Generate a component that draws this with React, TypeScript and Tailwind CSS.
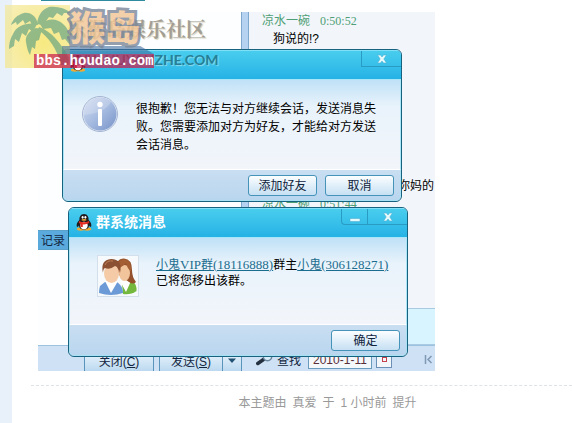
import React from 'react';

interface DialogProps {
  label: string;
  title: React.ReactNode;
  controls: React.ReactNode;
  actions: React.ReactNode;
  className: string;
  children: React.ReactNode;
}

const DialogButton: React.FC<{ children: React.ReactNode }> = ({ children }) => (
  <button
    type="button"
    className="w-[69px] h-[21px] rounded-[3px] border border-[#4593b8] bg-gradient-to-b from-[#fbfeff] to-[#c6e0f3] text-center leading-[18px] text-[#10233c]"
  >
    {children}
  </button>
);

const CloseButton = () => (
  <button type="button" aria-label="关闭" className="w-10 h-4 flex items-center justify-center border-l border-b border-[#2a9cc4]">
    <svg className="w-3 h-3" viewBox="0 0 12 12">
      <path d="M1.500 2H4.500L6 4L7.500 2H10.500L7.800 6L10.500 10H7.500L6 8L4.500 10H1.500L4.200 6Z" fill="#e6fafb" stroke="#4fb0d4" strokeWidth=".6" />
    </svg>
  </button>
);

const MinimizeButton = () => (
  <button type="button" aria-label="最小化" className="w-[26px] h-4 flex items-center justify-center rounded-bl-[4px] border-l border-b border-[#2a9cc4]">
    <svg className="w-3 h-3" viewBox="0 0 12 12">
      <path d="M1 7.500H11V10.500H1Z" fill="#e6fafb" stroke="#4fb0d4" strokeWidth=".6" />
    </svg>
  </button>
);

const Dialog: React.FC<DialogProps> = ({ label, title, controls, actions, className, children }) => (
  <section
    role="dialog"
    aria-label={label}
    className={`absolute w-[340px] flex flex-col overflow-hidden rounded-[6px] border border-[#17627f] bg-[#c3dcf1] ${className}`}
  >
    <header className="h-[29px] flex items-start justify-between border-t border-[#7fe0f7] bg-gradient-to-b from-[#48cdee] to-[#24b2e5]">
      {title}
      <div className="flex">{controls}</div>
    </header>
    <div className="flex-1 flex border-x border-t border-[#a8e6f8] bg-gradient-to-b from-[#bfe1f7] via-[#e9f3fb] via-30% to-[#f2f5fa]">
      {children}
    </div>
    <footer className="h-8 flex items-start justify-end gap-2 px-[6px] pt-[5px] border border-b-[#a8e0f4] border-x-[#a8e0f4] border-t-white rounded-b-[5px] bg-gradient-to-b from-[#c9def1] to-[#b9d6ef]">
      {actions}
    </footer>
  </section>
);

const Penguin = () => (
  <svg className="w-4 h-[17px]" viewBox="0 0 16 17">
    <ellipse cx="4.800" cy="15" rx="4" ry="1.700" fill="#efaa34" />
    <ellipse cx="11.200" cy="15" rx="4" ry="1.700" fill="#efaa34" />
    <path d="M8 0C4.600 0 3.200 3 3.400 6C1 8 0 11 1 13C2 13 3 11.500 3 11.500C3 14 5 15.500 8 15.500S13 14 13 11.500C13 11.500 14 13 15 13C16 11 15 8 12.600 6C12.800 3 11.400 0 8 0Z" fill="#211b1d" />
    <ellipse cx="8" cy="11.500" rx="3.700" ry="3.700" fill="#fff" />
    <ellipse cx="6.600" cy="3.300" rx="1" ry="1.400" fill="#fff" />
    <ellipse cx="9.400" cy="3.300" rx="1" ry="1.400" fill="#fff" />
    <ellipse cx="8" cy="5.900" rx="2.600" ry=".8" fill="#efaa34" />
    <path d="M3 7Q8 9.500 13 7L13.200 9Q9 11 6.800 10.300V13H4.500V9.700L2.900 9Z" fill="#e32a20" />
  </svg>
);

const InfoIcon = () => (
  <svg className="w-[38px] h-[38px] shrink-0" viewBox="0 0 38 38">
    <defs>
      <linearGradient id="info" x1="0" y1="0" x2="1" y2="1">
        <stop offset="0" stopColor="#d3ddf1" />
        <stop offset=".5" stopColor="#a6bbe0" />
        <stop offset="1" stopColor="#7592c7" />
      </linearGradient>
    </defs>
    <circle cx="19" cy="19" r="17.500" fill="#e6edf6" stroke="#a3b4d3" />
    <circle cx="19" cy="19" r="16.500" fill="url(#info)" />
    <path d="M2.500 20A16.500 16.500 0 0 1 30 7Q24 18 2.500 20Z" fill="#fff" opacity=".2" />
    <circle cx="19" cy="9.500" r="2.700" fill="#fff" />
    <rect x="17" y="14" width="4" height="17" rx="1" fill="#fff" />
  </svg>
);

const PeopleIcon = () => (
  <svg className="w-[42px] h-[42px] shrink-0" viewBox="0 0 42 42">
    <rect x=".5" y=".5" width="41" height="41" fill="#f7fafc" stroke="#d3dfea" />
    <path d="M25 28L35 26Q40 29 39.500 36Q34 40 26 39Z" fill="#74b83e" />
    <path d="M23 26L29 37L34 26Z" fill="#fff" />
    <path d="M19 14Q19 3 27 3.500Q35 4 35 15Q35 22 39 27Q36 30 32 27L22 20Z" fill="#94512c" />
    <ellipse cx="27.500" cy="18" rx="5.500" ry="8" fill="#f2c49c" />
    <path d="M20 13Q26 12 29 8Q30 13 34 17Q35 5 27 4Q20 5 20 13Z" fill="#a45e34" />
    <path d="M8 27L3 31Q2 34 2 38Q14 42 26 38Q26 31 20 27Z" fill="#6b9ad6" />
    <path d="M8 26L14 38L21 26Z" fill="#fff" />
    <ellipse cx="14.500" cy="18.500" rx="7.500" ry="9.500" fill="#f5cba7" />
    <path d="M6 18Q3 5 14 4Q26 4 23 18Q22 12 18 11Q13 15 8 13Q6 14 6 18Z" fill="#8c5032" />
    <path d="M8 10Q10 5 16 6" stroke="#bb7d56" fill="none" />
  </svg>
);

const Magnifier = () => (
  <svg className="w-[17px] h-4" viewBox="0 0 17 16">
    <path d="M7.500 7.500L1.800 11.500" stroke="#24303f" strokeWidth="3.500" strokeLinecap="round" />
    <circle cx="11.500" cy="4.500" r="4.200" fill="#d9effb" stroke="#69849e" strokeWidth="1.500" />
  </svg>
);

const Palm = () => (
  <svg className="w-[68px] h-[60px]" viewBox="0 0 68 60">
    <g fill="#529a80">
      <path d="M33 20C32 12 26 7 19 8C12 10 8 14 6 20L11 17L12 20L18 15L20 19L25 16L27 20Z" />
      <path d="M32 19C22 17 11 21 8 29C5 34 4 39 4 44L9 41L10 34L14 37L17 28L21 31L24 24L28 27Z" />
      <path d="M31 23C24 26 20 31 21 37C22 43 23 47 25 50L27 42L30 44L31 36L34 35L37 24Z" />
      <path d="M32 19C33 11 36 5 44 2C52 1 60 3 66 8L59 8L57 11L52 8L48 13L44 12L38 20Z" />
      <path d="M35 19C43 13 52 13 58 19C64 24 66 32 65 40L60 34L57 35L54 27L49 29L46 23L38 24Z" />
      <path d="M34 22C46 26 56 38 64 53L63 60H56C52 44 44 32 33 25Z" />
    </g>
  </svg>
);

// Forum badge stamped over the top left corner
const Watermark = () => (
  <div className="absolute left-[5px] top-[5px] w-[150px] h-[63px] pointer-events-none">
    <div className="absolute left-0 top-0 w-[65px] h-[63px] bg-[radial-gradient(circle_at_60%_60%,#f5e04a,#f3e89f)] opacity-70" />
    <div className="absolute left-[57px] top-[41px] w-[92px] h-2 bg-[#3f6d9e] opacity-60 [clip-path:polygon(0_0,85%_0,100%_100%,0_100%)]" />
    <div className="absolute left-0 top-0 opacity-60">
      <Palm />
    </div>
    <svg className="absolute left-[62px] top-0 w-[78px] h-[46px] opacity-80" viewBox="0 0 78 46">
      <text
        x="3"
        y="36"
        fontSize="35"
        fontWeight="900"
        fontFamily="'Noto Sans CJK SC', sans-serif"
        fill="#f1c594"
        stroke="#7b8798"
        strokeWidth="6"
        strokeLinejoin="miter"
        paintOrder="stroke"
      >
        猴岛
      </text>
    </svg>
    <div className="absolute left-[29px] top-[49px] w-[120px] h-[14px] bg-[#c91b4c] opacity-70" />
    <p className="absolute left-[31px] top-[49px] font-['Liberation_Mono',monospace] text-[14px] leading-[14px] font-bold text-white">
      bbs.houdao.com
    </p>
  </div>
);

const ChatWindow = () => (
  <div className="min-h-[359px] flex flex-col">
    <div className="flex-1 flex">
      <div className="w-[203px] shrink-0 flex flex-col bg-[#fdfeff]">
        <p className="h-[218px] pt-1 pl-[28px] whitespace-nowrap font-['Noto_Serif_CJK_SC','Noto_Sans_CJK_SC',serif] text-[20px] leading-[26px] font-bold text-[#a39e94] [text-shadow:1px_1px_1px_#d8d2c0]">
          乐猴岛娱乐社区
        </p>
        <div className="w-[31px] h-5 pl-[3px] border-y border-[#5aa1cc] bg-[#5aaade] leading-[20px] whitespace-nowrap text-[#12263f]">记录</div>
      </div>
      <div className="w-2 shrink-0 border-x border-[#7ea9cf] bg-[#b5d3f1]" />
      <div className="flex-1 flex flex-col bg-[#f2f6fa]">
        <div className="flex-1 pl-[13px] leading-[18px]">
          <p className="text-[#4f9f76]">
            凉水一碗<span className="pl-2.5 font-['Liberation_Serif',serif]">0:50:52</span>
          </p>
          <p className="pl-[11px]">狗说的!?</p>
          <p className="pt-[129px] pr-px text-right">你妈的</p>
          <p className="text-[#4f9f76]">
            凉水一碗<span className="pl-2.5 font-['Liberation_Serif',serif]">0:51:44</span>
          </p>
        </div>
        <div className="h-[37px] border-y border-[#a9cbe2] bg-[#d7f4ff]" />
      </div>
    </div>
    <div className="h-[26px] flex items-end overflow-hidden border-t border-[#9cc2df] bg-[#cfe2f5] text-[#12263f]">
      <div className="w-[211px] shrink-0 flex justify-end gap-[5px] pr-[7px]">
        <button type="button" className="w-[70px] h-[21px] pt-[3px] border-x border-[#5b94bb] bg-gradient-to-b from-[#eef7fd] to-[#bcd9f0] leading-[18px]">
          关闭(<u>C</u>)
        </button>
        <div className="flex border-x border-[#5b94bb] bg-gradient-to-b from-[#eef7fd] to-[#bcd9f0]">
          <button type="button" className="w-[62px] h-[21px] pt-[3px] leading-[18px]">
            发送(<u>S</u>)
          </button>
          <button type="button" aria-label="发送选项" className="w-[19px] flex items-center justify-center border-l border-[#5b94bb]">
            <svg className="w-2 h-[5px]" viewBox="0 0 8 5">
              <path d="M0 .5H8L4 5Z" fill="#235173" />
            </svg>
          </button>
        </div>
      </div>
      <div className="flex-1 h-[23px] flex items-center pl-[7px] pr-0.5">
        <Magnifier />
        <label htmlFor="date" className="pt-0.5 pl-1 pr-[7px]">查找</label>
        <input
          id="date"
          defaultValue="2010-1-11"
          className="w-16 h-[19px] px-1 border border-[#6b9cbf] bg-[#f4f8fb] text-[12px] text-[#5b2f38]"
        />
        <button type="button" aria-label="日历" className="ml-1 w-4 h-[17px] flex items-center justify-center border border-[#6b8fb5] bg-[#f3f6fa]">
          <svg className="w-[5px] h-[5px]" viewBox="0 0 5 5">
            <rect x=".5" y=".5" width="4" height="4" fill="none" stroke="#c6404c" />
          </svg>
        </button>
        <button type="button" aria-label="第一页" className="ml-auto">
          <svg className="w-[9px] h-[9px]" viewBox="0 0 9 9">
            <path d="M1.500 0V9M7.500 1L4 4.500L7.500 8" fill="none" stroke="#7f98b3" strokeWidth="1.500" />
          </svg>
        </button>
      </div>
    </div>
  </div>
);

export default function App() {
  return (
    <div className="relative min-h-screen flex bg-white font-['Liberation_Sans','Noto_Sans_CJK_SC',sans-serif] text-[12px] text-black">
      <aside className="w-3 shrink-0 bg-[#e8f1f9]" />
      <main className="flex-1 min-w-0 pl-[19px]">
        <div className="h-3 pl-[10px]">
          <div className="w-[104px] h-px bg-[#2f8ba0]" />
        </div>
        <div className="relative ml-[7px] max-w-[397px]">
          <ChatWindow />
          <Dialog
            label="提示"
            className="left-6 top-[37px] h-[153px]"
            title={
              <div className="pl-[7px] pt-1">
                <Penguin />
              </div>
            }
            controls={<CloseButton />}
            actions={
              <>
                <DialogButton>添加好友</DialogButton>
                <DialogButton>取消</DialogButton>
              </>
            }
          >
            <div className="flex items-start gap-[17px] pl-[17px] pt-[15px] pr-5">
              <InfoIcon />
              <p className="w-[242px] pt-[5px] leading-[18px]">很抱歉！您无法与对方继续会话，发送消息失败。您需要添加对方为好友，才能给对方发送会话消息。</p>
            </div>
          </Dialog>
          <Dialog
            label="群系统消息"
            className="left-[30px] top-[195px] h-[150px]"
            title={
              <h2 className="flex items-center gap-1 pl-[7px] pt-1 text-[14px] leading-[18px] font-bold text-white">
                <Penguin />
                群系统消息
              </h2>
            }
            controls={
              <>
                <MinimizeButton />
                <CloseButton />
              </>
            }
            actions={<DialogButton>确定</DialogButton>}
          >
            <div className="flex items-start gap-[17px] pl-[27px] pt-[17px]">
              <PeopleIcon />
              <p className="pt-0.5 leading-4 whitespace-nowrap">
                <a href="#group" className="text-[#1b6d8e] underline">
                  小鬼<span className="font-['Liberation_Serif',serif] text-[13px] leading-none">VIP</span>群
                  <span className="font-['Liberation_Serif',serif] text-[13px] leading-none">(18116888)</span>
                </a>
                群主
                <a href="#owner" className="text-[#1b6d8e] underline">
                  小鬼<span className="font-['Liberation_Serif',serif] text-[13px] leading-none">(306128271)</span>
                </a>
                <br />
                已将您移出该群。
              </p>
            </div>
          </Dialog>
          <p className="absolute left-5 top-[41px] font-['Lato',sans-serif] text-[14px] leading-[14px] font-bold text-[#267f96] [text-shadow:1px_1px_1px_#8fdcec] pointer-events-none">
            WWW.HUYANZHE.COM
          </p>
        </div>
        <footer className="mt-[14px] border-t border-dashed border-[#dfe3e6]">
          <p className="pt-2 pl-[52px] flex justify-center gap-1.5 leading-[18px] text-[#999]">
            <span>本主题由</span>
            <span>真爱</span>
            <span>于</span>
            <span>1 小时前</span>
            <span>提升</span>
          </p>
        </footer>
      </main>
      <Watermark />
    </div>
  );
}
